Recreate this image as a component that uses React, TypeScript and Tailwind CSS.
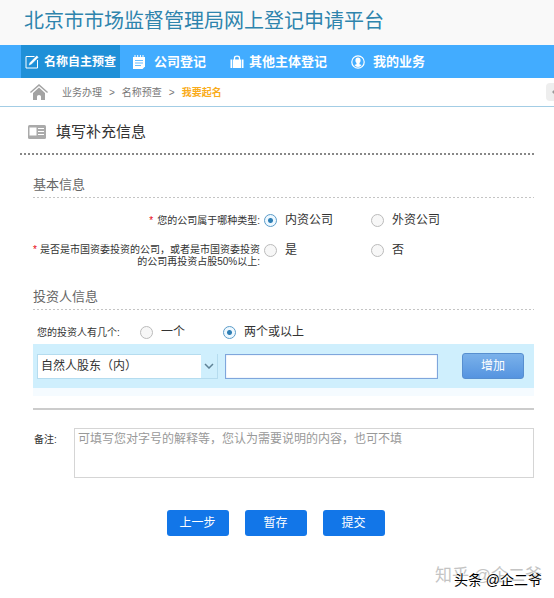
import { type ReactNode } from "react";

const navItems = [
  { label: "公司登记", icon: <NotepadIcon />, className: "ml-3 gap-2" },
  { label: "其他主体登记", icon: <BagIcon />, className: "ml-6 gap-[5px]" },
  { label: "我的业务", icon: <UserIcon />, className: "ml-6 gap-2" },
];

function EditIcon() {
  return (
    <svg viewBox="0 0 14 14" className="size-3.5 shrink-0" fill="none" stroke="currentColor" strokeWidth="1">
      <path d="M9.500 1.500H1v11.500h11.500V5" />
      <path d="M4 10.200 4.800 7.800 11.800.8l1.500 1.500-7 7z" fill="currentColor" strokeWidth="0.3" />
    </svg>
  );
}

function NotepadIcon() {
  return (
    <svg viewBox="0 0 14 14" className="size-3.5 shrink-0" fill="currentColor">
      <path d="M1 2h12v9.500L10.500 14H1z" />
      <path d="M3 0v3M5.700 0v3M8.400 0v3M11 0v3" stroke="currentColor" strokeWidth="1" />
      <path d="M3 5.500h8M3 8h8M3 10.500h6" stroke="#42acff" strokeWidth="0.8" fill="none" />
    </svg>
  );
}

function BagIcon() {
  return (
    <svg viewBox="0 0 14 14" className="size-3.5 shrink-0" fill="currentColor">
      <path d="M.5 4.500h1.800V13H.5zM3 4.500h8V13H3zM11.700 4.500h1.800V13h-1.800z" />
      <path d="M4.500 5V3Q4.500 1.200 7 1.200T9.500 3v2" fill="none" stroke="currentColor" strokeWidth="1.300" />
    </svg>
  );
}

function UserIcon() {
  return (
    <svg viewBox="0 0 14 14" className="size-3.5 shrink-0" fill="currentColor">
      <circle cx="7" cy="7" r="6.200" fill="none" stroke="currentColor" strokeWidth="1.200" />
      <path d="M7 2.600c1.800 0 2.600 1.200 2.600 2.800 0 1.200-.5 2-1.100 2.600v1.200l2.200.9Q9.200 12 7 12t-3.700-1.900l2.200-.9V8C4.900 7.400 4.400 6.600 4.400 5.400c0-1.600.8-2.800 2.600-2.800z" />
    </svg>
  );
}

function HomeIcon() {
  return (
    <svg viewBox="0 0 18 16" className="h-4 w-[18px]" fill="#a3a3a3">
      <path d="M9 0 0 8l.9.9L9 1.900l8.100 7 .9-.9z" />
      <path d="M9 3.600 3 9v7h4v-3.500q0-1.500 2-1.500t2 1.500V16h4V9z" />
    </svg>
  );
}

function CardIcon() {
  return (
    <svg viewBox="0 0 18 14" className="h-3.5 w-[18px] shrink-0">
      <rect width="18" height="14" rx="1.500" fill="#aaa" />
      <path d="M1.500 2.500h7v8h-7z" fill="#fff" />
      <path d="M10 3.500h6M10 6.500h6M10 9.500h6" stroke="#fff" />
    </svg>
  );
}

interface RadioProps {
  name: string;
  label: string;
  checked?: boolean;
  className?: string;
}

function Radio({ name, label, checked, className = "" }: RadioProps) {
  return (
    <label className={`flex items-center gap-2 text-xs ${className}`}>
      <input
        type="radio"
        name={name}
        defaultChecked={checked}
        className="size-[13px] shrink-0 appearance-none rounded-full border border-[#bbb] bg-[#f7f7f7] checked:border-[#5b9cc9] checked:bg-[radial-gradient(circle,#2f7fb5_2px,#eef8ff_3px)]"
      />
      {label}
    </label>
  );
}

function SectionTitle({ children }: { children: ReactNode }) {
  return (
    <h3 className="bg-[repeating-linear-gradient(90deg,#c4c4c4_0_2px,transparent_2px_4px)] bg-[length:100%_1px] bg-bottom bg-no-repeat pb-[3px] text-[13px] leading-5 text-[#666]">
      {children}
    </h3>
  );
}

function FormButton({ children }: { children: ReactNode }) {
  return (
    <button
      type="button"
      className="h-[26px] w-[62px] rounded-[3px] bg-[#1276e8] text-xs text-white"
    >
      {children}
    </button>
  );
}

export default function App() {
  return (
    <div className="bg-white font-['Liberation_Sans','Noto_Sans_CJK_SC',sans-serif] text-[#333]">
      <header className="flex h-[45px] items-center bg-[#f9f9f9] px-6">
        <h1 className="pb-1 text-xl leading-7 text-[#2e84ad]">
          北京市市场监督管理局网上登记申请平台
        </h1>
      </header>

      <nav className="flex h-[33px] items-stretch bg-[#42acff] pl-[21px] text-[13px] font-bold text-white">
        <a href="#name" className="flex items-center gap-[5px] bg-[#1f90d8] px-1 text-xs">
          <EditIcon />
          名称自主预查
        </a>
        {navItems.map((item) => (
          <a key={item.label} href="#nav" className={`flex items-center ${item.className}`}>
            {item.icon}
            {item.label}
          </a>
        ))}
      </nav>

      <div className="flex h-[29px] items-center justify-between border-b border-[#a3cde5] pl-[30px] text-[10px] text-[#777]">
        <div className="flex items-center gap-[7px]">
          <a href="#home" aria-label="首页" className="mr-[7px]">
            <HomeIcon />
          </a>
          <a href="#business">业务办理</a>
          <span>&gt;</span>
          <a href="#check">名称预查</a>
          <span>&gt;</span>
          <a href="#naming" className="font-bold text-[#f9ac1c]">
            我要起名
          </a>
        </div>
        <button type="button" aria-label="收起" className="flex h-[18px] w-2 items-center justify-end rounded-l-sm bg-[#eee]">
          <svg viewBox="0 0 2 4" className="h-1 w-0.5" fill="#999">
            <path d="M2 0v4L0 2z" />
          </svg>
        </button>
      </div>

      <main className="px-5">
        <h2 className="flex h-12 items-center gap-2.5 bg-[repeating-linear-gradient(90deg,#888_0_2px,transparent_2px_4px)] bg-[length:100%_2px] bg-bottom bg-no-repeat pl-2 pt-0.5 text-[15px]">
          <CardIcon />
          填写补充信息
        </h2>

        <form className="pl-[13px] pt-5">
          <SectionTitle>基本信息</SectionTitle>
          <div role="radiogroup" aria-labelledby="company-type" className="mt-3 flex h-5 items-center">
            <span id="company-type" className="w-[227px] text-right text-[10px]">
              <span className="mr-1 text-red-600">*</span>您的公司属于哪种类型:
            </span>
            <Radio name="type" label="内资公司" checked className="ml-1 w-[107px]" />
            <Radio name="type" label="外资公司" />
          </div>
          <div role="radiogroup" aria-labelledby="state-owned" className="mt-3 flex items-start">
            <span id="state-owned" className="flex w-[227px] justify-end gap-[3px] whitespace-nowrap pt-0.5 text-right text-[10px] leading-3">
              <span className="text-red-600">*</span>
              <span>
                是否是市国资委投资的公司，或者是市国资委投资
                <br />
                的公司再投资占股50%以上:
              </span>
            </span>
            <Radio name="state" label="是" className="ml-1 w-[107px]" />
            <Radio name="state" label="否" />
          </div>

          <div className="mt-[19px]">
            <SectionTitle>投资人信息</SectionTitle>
          </div>
          <div role="radiogroup" aria-labelledby="investor-count" className="mt-3 flex h-5 items-center pl-1">
            <span id="investor-count" className="w-[103px] text-[10px]">
              您的投资人有几个:
            </span>
            <Radio name="count" label="一个" className="w-[83px]" />
            <Radio name="count" label="两个或以上" checked />
          </div>

          <div className="mt-0.5 flex h-11 items-center bg-[#cfeffd] pl-1 pr-2.5">
            <div className="relative w-[181px]">
              <select
                aria-label="投资人类型"
                className="h-[25px] w-full appearance-none border border-[#b5dcef] bg-white pl-[3px] text-xs"
              >
                <option>自然人股东（内）</option>
              </select>
              <span className="pointer-events-none absolute inset-y-px right-px flex w-4 items-center justify-center bg-[#cfeffd]">
                <svg viewBox="0 0 10 6" className="h-1.5 w-2.5" fill="none" stroke="#5f8296" strokeWidth="1.500">
                  <path d="m1 1 4 4 4-4" />
                </svg>
              </span>
            </div>
            <input
              type="text"
              aria-label="投资人名称"
              className="ml-[7px] h-[25px] min-w-0 flex-1 border border-[#7fa6dc] bg-white px-1 text-xs shadow-[inset_0_0_1px_#7fa6dc]"
            />
            <button
              type="button"
              className="ml-6 h-[26px] w-[62px] rounded-[3px] border border-[#578fd0] bg-linear-to-b from-[#7ab1ea] to-[#5594e0] text-xs text-white"
            >
              增加
            </button>
          </div>
          <div className="h-2 bg-[#f5fbff]" />

          <hr className="mt-3 border-t-2 border-[#ccc]" />

          <div className="mt-[18px] flex">
            <label htmlFor="remark" className="w-[41px] pl-px pt-1 text-[10px]">
              备注:
            </label>
            <textarea
              id="remark"
              placeholder="可填写您对字号的解释等，您认为需要说明的内容，也可不填"
              className="h-[50px] flex-1 resize-none border border-[#d5d5d5] px-[3px] py-0.5 text-xs placeholder:text-[#999]"
            />
          </div>

          <div className="mr-4 mt-8 flex justify-center gap-4">
            <FormButton>上一步</FormButton>
            <FormButton>暂存</FormButton>
            <FormButton>提交</FormButton>
          </div>
        </form>
      </main>

      <footer className="relative mt-7 h-9">
        <span className="absolute right-3 top-0 text-[17px] leading-6 text-[#c4c4c4]">知乎 @企二爷</span>
        <span className="absolute right-3 top-1 text-sm leading-6 text-black [text-shadow:0_0_2px_#fff,0_0_2px_#fff]">
          头条 @企二爷
        </span>
      </footer>
    </div>
  );
}
